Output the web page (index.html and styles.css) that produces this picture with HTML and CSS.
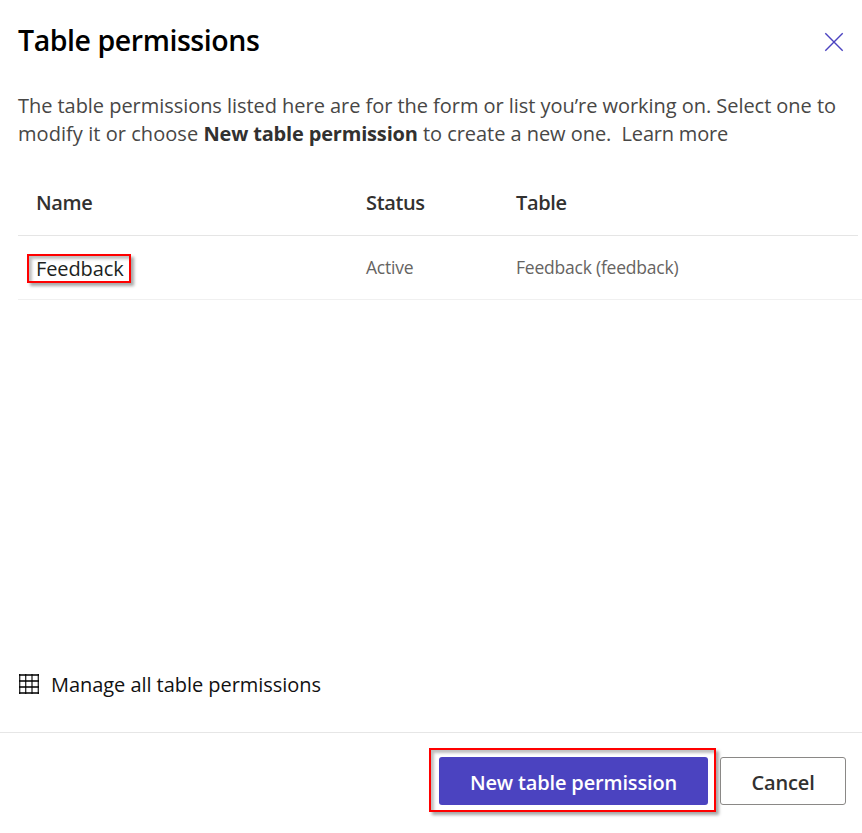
FILE: index.html
```
<!DOCTYPE html>
<html lang="en">
<head>
<meta charset="utf-8">
<title>Table permissions</title>
<link rel="stylesheet" href="styles.css">
</head>
<body>
<section class="panel">
  <header class="panel-header">
    <h1 class="title">Table permissions</h1>
    <button class="close" aria-label="Close">
      <svg width="20" height="20" viewBox="0 0 20 20"><path d="M1.3 1.3 18.7 18.7M18.7 1.3 1.3 18.7"/></svg>
    </button>
  </header>
  <p class="intro">
    The table permissions listed here are for the form or list you’re working on. Select one to<br>
    <span class="lead">modify it or choose </span><b>New table permission</b> to create a new one.&nbsp; <a class="learn">Learn more</a>
  </p>
  <div class="table">
    <div class="row head">
      <span>Name</span><span>Status</span><span>Table</span>
    </div>
    <div class="row item">
      <span><a class="marked">Feedback</a></span><span>Active</span><span>Feedback (feedback)</span>
    </div>
  </div>
  <a class="manage">
    <svg width="22" height="22" viewBox="0 0 22 22">
      <path class="cols" d="M1.75 1V21M7.75 1V21M14 1V21M20.25 1V21"/>
      <path class="rows" d="M1 2H21M1 8H21M1 14H21M1 20H21"/>
    </svg>
    <span>Manage all table permissions</span>
  </a>
  <footer class="footer">
    <div class="callout"><button class="btn primary">New table permission</button></div>
    <button class="btn secondary">Cancel</button>
  </footer>
</section>
</body>
</html>
```
FILE: styles.css
```
* { box-sizing: border-box; }
body {
  margin: 0;
  background: #fff;
  color: #323130;
  font-family: "Open Sans", "Noto Sans", sans-serif;
  font-size: 20px;
  overflow: hidden;
}
button { font: inherit; cursor: pointer; }
.panel {
  width: 862px;
  height: 833px;
  display: flex;
  flex-direction: column;
  white-space: nowrap;
}
.panel-header {
  height: 92px;
  padding: 20px 18px 0;
  display: flex;
  justify-content: space-between;
  align-items: flex-start;
}
.title {
  margin: 0;
  color: #000;
  font-size: 28.5px;
  font-weight: 560;
  line-height: 41px;
  letter-spacing: -0.44px;
}
.close {
  margin-top: 12px;
  padding: 0;
  border: 0;
  background: none;
  line-height: 0;
}
.close path { fill: none; stroke: #4b43c0; stroke-width: 1.4; }
.intro {
  margin: 0;
  padding-left: 18px;
  height: 96px;
  line-height: 28px;
  letter-spacing: -0.045px;
  color: #484746;
}
.intro .lead { letter-spacing: 0.05px; }
.intro b { color: #323130; letter-spacing: -0.17px; }
.intro .learn { letter-spacing: -0.2px; }
.table { margin-left: 18px; }
.row {
  display: grid;
  grid-template-columns: 330px 150px 1fr;
  align-items: center;
  padding-left: 18px;
}
.head {
  height: 48px;
  width: 840px;
  padding-bottom: 18px;
  font-weight: 560;
  letter-spacing: -0.35px;
  border-bottom: 1px solid #e5e5e5;
}
.item {
  height: 64px;
  padding-bottom: 1px;
  border-bottom: 1px solid #f0f0f0;
  color: #666462;
  font-size: 17.5px;
  letter-spacing: -0.22px;
}
.marked {
  display: block;
  width: 104px;
  height: 29px;
  margin: 2px 0 0 -9px;
  padding-left: 7px;
  border: 2px solid #f00;
  box-shadow: 3px 3px 3px rgba(0, 0, 0, 0.35), inset 3px 3px 3px rgba(0, 0, 0, 0.25);
  color: #201f1e;
  font-size: 20px;
  line-height: 26px;
  letter-spacing: -0.1px;
}
.manage {
  display: flex;
  align-items: center;
  gap: 11px;
  height: 40px;
  margin: auto 0 28px 18px;
  color: #111;
  letter-spacing: -0.05px;
}
.manage path { fill: none; stroke: #000; }
.cols { stroke-width: 1.1; }
.rows { stroke-width: 1.6; }
.footer {
  height: 101px;
  padding: 15px 16px 0 0;
  border-top: 1px solid #e6e6e6;
  display: flex;
  justify-content: flex-end;
  align-items: flex-start;
  gap: 4px;
}
.callout {
  width: 287px;
  height: 64px;
  padding: 7px 6px 7px 8px;
  border: 2px solid #f00;
  box-shadow: 3px 3px 3px rgba(0, 0, 0, 0.35), inset 3px 3px 3px rgba(0, 0, 0, 0.25);
}
.btn { height: 48px; padding: 2px 0 0; border-radius: 3px; font-weight: 600; letter-spacing: -0.15px; }
.primary { width: 269px; border: 0; background: #4b43c0; color: #fff; }
.secondary { width: 126px; margin-top: 9px; border: 1px solid #8a8886; background: #fff; color: #323130; font-weight: 570; }
```
